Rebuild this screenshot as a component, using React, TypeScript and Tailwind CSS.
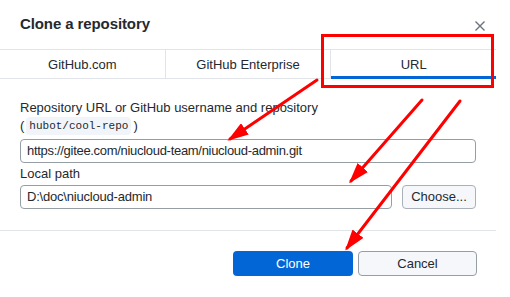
import React from 'react';

const font = { fontFamily: '"Liberation Sans", Arial, sans-serif' };

const tabs = ['GitHub.com', 'GitHub Enterprise', 'URL'];

// Red annotation arrows drawn over the dialog
const Arrows = () => (
  <svg className="absolute inset-0 pointer-events-none" width="510" height="297" viewBox="0 0 510 297">
    <defs>
      <marker id="head" markerWidth="7" markerHeight="4.6" refX="6" refY="2.3" orient="auto" markerUnits="strokeWidth">
        <path d="M0,0 L7,2.3 L0,4.6 Z" fill="#ff0000" />
      </marker>
    </defs>
    <g stroke="#ff0000" strokeWidth="3" fill="none" strokeLinecap="round">
      <line x1="317" y1="80" x2="230" y2="139" markerEnd="url(#head)" />
      <line x1="422" y1="100" x2="351" y2="181" markerEnd="url(#head)" />
      <line x1="460" y1="101" x2="347" y2="248" markerEnd="url(#head)" />
    </g>
    <rect x="322.5" y="35.5" width="170" height="51" fill="none" stroke="#ff0000" strokeWidth="3" />
  </svg>
);

export default function App() {
  return (
    <div className="relative w-[510px] h-[297px] bg-white overflow-hidden text-[#24292e]" style={font}>
      <div className="w-[496px] flex flex-col">
        {/* header */}
        <div className="h-[49px] flex items-center justify-between pl-5 pr-[10px]">
          <span className="text-[15px] font-bold tracking-[-0.1px]">Clone a repository</span>
          <svg width="12" height="12" viewBox="0 0 12 12" className="text-[#6a737d] mt-[2px]">
            <path d="M1.5 1.5 L10.5 10.5 M10.5 1.5 L1.5 10.5" stroke="currentColor" strokeWidth="1.4" />
          </svg>
        </div>

        {/* tabs */}
        <div className="flex h-[30px] border-y border-[#e1e4e8]">
          {tabs.map((t, i) => (
            <div
              key={t}
              className={`relative flex-1 flex items-center justify-center text-[13px] pt-[2px] ${i > 0 ? 'border-l border-[#e1e4e8]' : ''}`}
            >
              {t}
              {i === 2 && <div className="absolute left-0 right-0 -bottom-px h-[3px] bg-[#0366d6]" />}
            </div>
          ))}
        </div>

        {/* body */}
        <div className="px-5 pt-[20px] flex flex-col text-[13px]">
          <div className="leading-[18px]">Repository URL or GitHub username and repository</div>
          <div className="leading-[18px] flex items-center">
            <span>(</span>
            <span className="mx-[2px] px-[3px] bg-[#f1f5fa] rounded text-[11px]" style={{ fontFamily: '"Liberation Mono", monospace' }}>
              hubot/cool-repo
            </span>
            <span>)</span>
          </div>
          <div className="mt-[4px] h-[24px] border border-[#959da5] rounded-[4px] flex items-center px-[6px] tracking-[-0.3px]">
            https://gitee.com/niucloud-team/niucloud-admin.git
          </div>
          <div className="leading-[22px]">Local path</div>
          <div className="flex gap-[10px]">
            <div className="flex-1 h-[24px] border border-[#959da5] rounded-[4px] flex items-center px-[6px] tracking-[-0.2px]">
              D:\doc\niucloud-admin
            </div>
            <div className="w-[74px] h-[24px] border border-[#aab0b7] rounded-[4px] bg-[#f5f7fa] flex items-center justify-center">
              Choose...
            </div>
          </div>
        </div>

        {/* footer */}
        <div className="mt-[21px] border-t border-[#e1e4e8] flex justify-end gap-[5px] pr-[19px] pt-[20px]">
          <div className="w-[120px] h-[25px] rounded-[4px] bg-[#0366d6] text-white text-[13px] flex items-center justify-center">
            Clone
          </div>
          <div className="w-[119px] h-[25px] rounded-[4px] border border-[#959da5] bg-[#f5f7fa] text-[13px] flex items-center justify-center">
            Cancel
          </div>
        </div>
      </div>
      <Arrows />
    </div>
  );
}
